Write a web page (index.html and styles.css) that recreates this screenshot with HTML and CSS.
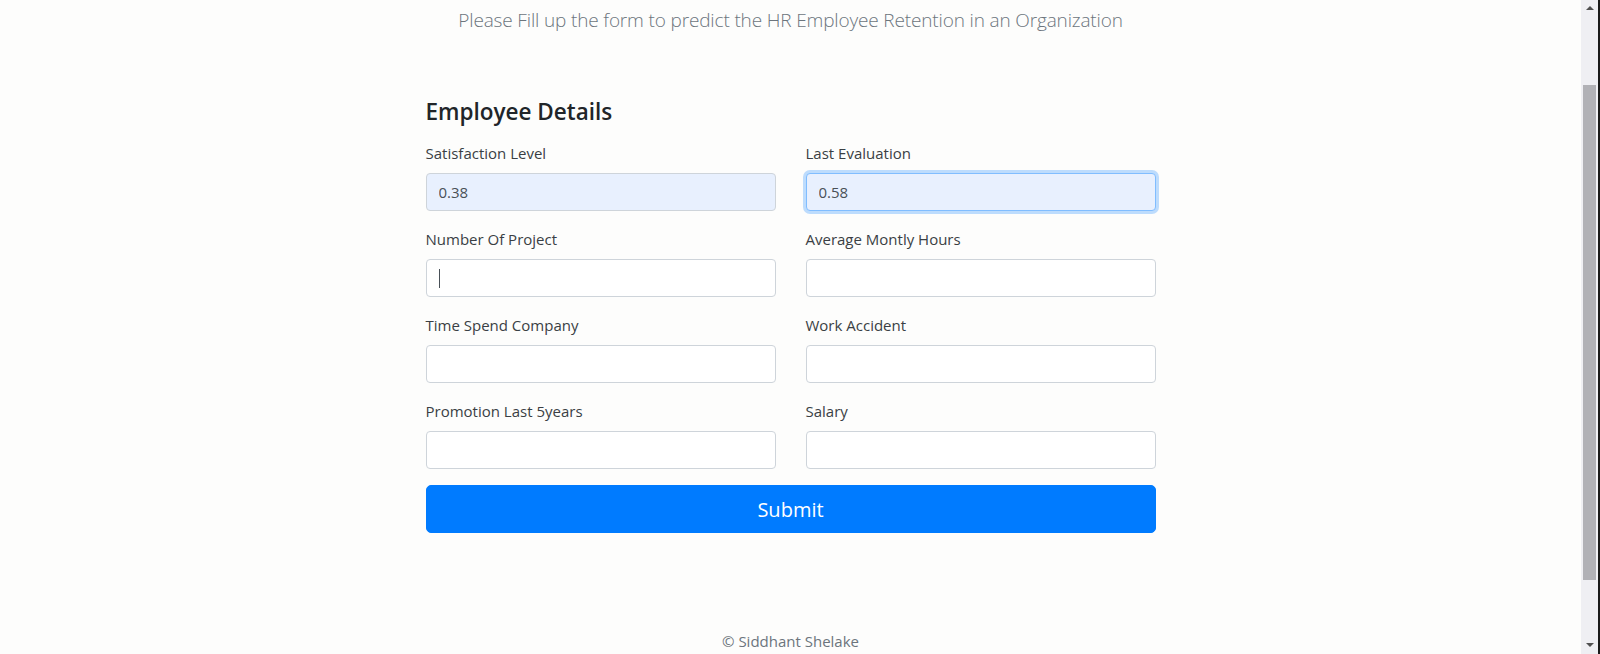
FILE: index.html
```html
<!DOCTYPE html>
<html lang="en">
<head>
<meta charset="utf-8">
<title>HR Employee Retention</title>
<link rel="stylesheet" href="styles.css">
</head>
<body>
<div class="viewport">
  <p class="lead">Please Fill up the form to predict the HR Employee Retention in an Organization</p>
  <form class="emp-form">
    <h4 class="form-title">Employee Details</h4>
    <div class="grid">
      <div class="form-group">
        <label>Satisfaction Level</label>
        <input class="form-control autofill" type="text" value="0.38">
      </div>
      <div class="form-group">
        <label>Last Evaluation</label>
        <input class="form-control autofill focused" type="text" value="0.58">
      </div>
      <div class="form-group">
        <label>Number Of Project</label>
        <div class="field">
          <input class="form-control" type="text">
          <span class="caret"></span>
        </div>
      </div>
      <div class="form-group">
        <label>Average Montly Hours</label>
        <input class="form-control" type="text">
      </div>
      <div class="form-group">
        <label>Time Spend Company</label>
        <input class="form-control" type="text">
      </div>
      <div class="form-group">
        <label>Work Accident</label>
        <input class="form-control" type="text">
      </div>
      <div class="form-group">
        <label>Promotion Last 5years</label>
        <input class="form-control" type="text">
      </div>
      <div class="form-group">
        <label>Salary</label>
        <input class="form-control" type="text">
      </div>
    </div>
    <button class="btn-submit" type="button">Submit</button>
  </form>
  <footer class="footer">© Siddhant Shelake</footer>
</div>
<div class="scrollbar">
  <div class="sb-track">
    <span class="sb-arrow sb-up"></span>
    <div class="sb-space-top"></div>
    <div class="sb-thumb"></div>
    <div class="sb-space-bottom"></div>
    <span class="sb-arrow sb-down"></span>
  </div>
  <div class="sb-edge"></div>
</div>
</body>
</html>
```
FILE: styles.css
```css
html, body {
  margin: 0;
  height: 654px;
  overflow: hidden;
}
body {
  display: flex;
  background: #fdfdfc;
  font-family: "Open Sans", "Noto Sans", sans-serif;
  color: #212529;
}
.viewport {
  flex: 1;
  display: flex;
  flex-direction: column;
  align-items: center;
}
.lead {
  margin: 5px 0 0;
  font-size: 19px;
  line-height: 30px;
  letter-spacing: -0.15px;
  font-weight: 300;
  color: #6c757d;
}
.emp-form {
  width: 730px;
  margin-top: 62px;
}
.form-title {
  margin: 0 0 15px;
  font-size: 22.5px;
  line-height: 29px;
  font-weight: 600;
  color: #212529;
}
.grid {
  display: grid;
  grid-template-columns: 1fr 1fr;
  column-gap: 30px;
}
.form-group {
  display: flex;
  flex-direction: column;
  margin-bottom: 16px;
}
.form-group label {
  font-size: 15px;
  line-height: 24px;
  margin-bottom: 8px;
  color: #3a3f44;
}
.field {
  position: relative;
}
.form-control {
  box-sizing: border-box;
  width: 100%;
  height: 38px;
  margin: 0;
  padding: 6px 12px;
  font-family: inherit;
  font-size: 15px;
  color: #495057;
  background: #fff;
  border: 1px solid #ced4da;
  border-radius: 4px;
  outline: none;
}
.autofill {
  background: #e8f0fe;
}
.focused {
  border-color: #80bdff;
  box-shadow: 0 0 0 3px rgba(0, 123, 255, 0.25);
}
.caret {
  position: absolute;
  left: 13px;
  top: 10px;
  width: 1px;
  height: 19px;
  background: #495057;
}
.btn-submit {
  display: block;
  width: 100%;
  height: 48px;
  margin: 0;
  padding: 0;
  font-family: inherit;
  font-size: 20px;
  color: #fff;
  background: #007bff;
  border: 1px solid #007bff;
  border-radius: 5px;
}
.footer {
  margin-top: 96px;
  font-size: 15px;
  line-height: 24px;
  color: #6c757d;
}
.scrollbar {
  width: 19px;
  display: flex;
}
.sb-track {
  width: 17px;
  background: #efeff3;
  display: flex;
  flex-direction: column;
  align-items: center;
}
.sb-arrow {
  width: 0;
  height: 0;
  border-left: 4px solid transparent;
  border-right: 4px solid transparent;
}
.sb-up {
  margin-top: 6px;
  border-bottom: 4px solid #505050;
}
.sb-down {
  margin-bottom: 7px;
  border-top: 4px solid #505050;
}
.sb-space-top {
  height: 75px;
}
.sb-thumb {
  width: 13px;
  height: 495px;
  background: #b1b1b6;
}
.sb-space-bottom {
  flex: 1;
}
.sb-edge {
  width: 2px;
  background: #1a1a1a;
}
```
